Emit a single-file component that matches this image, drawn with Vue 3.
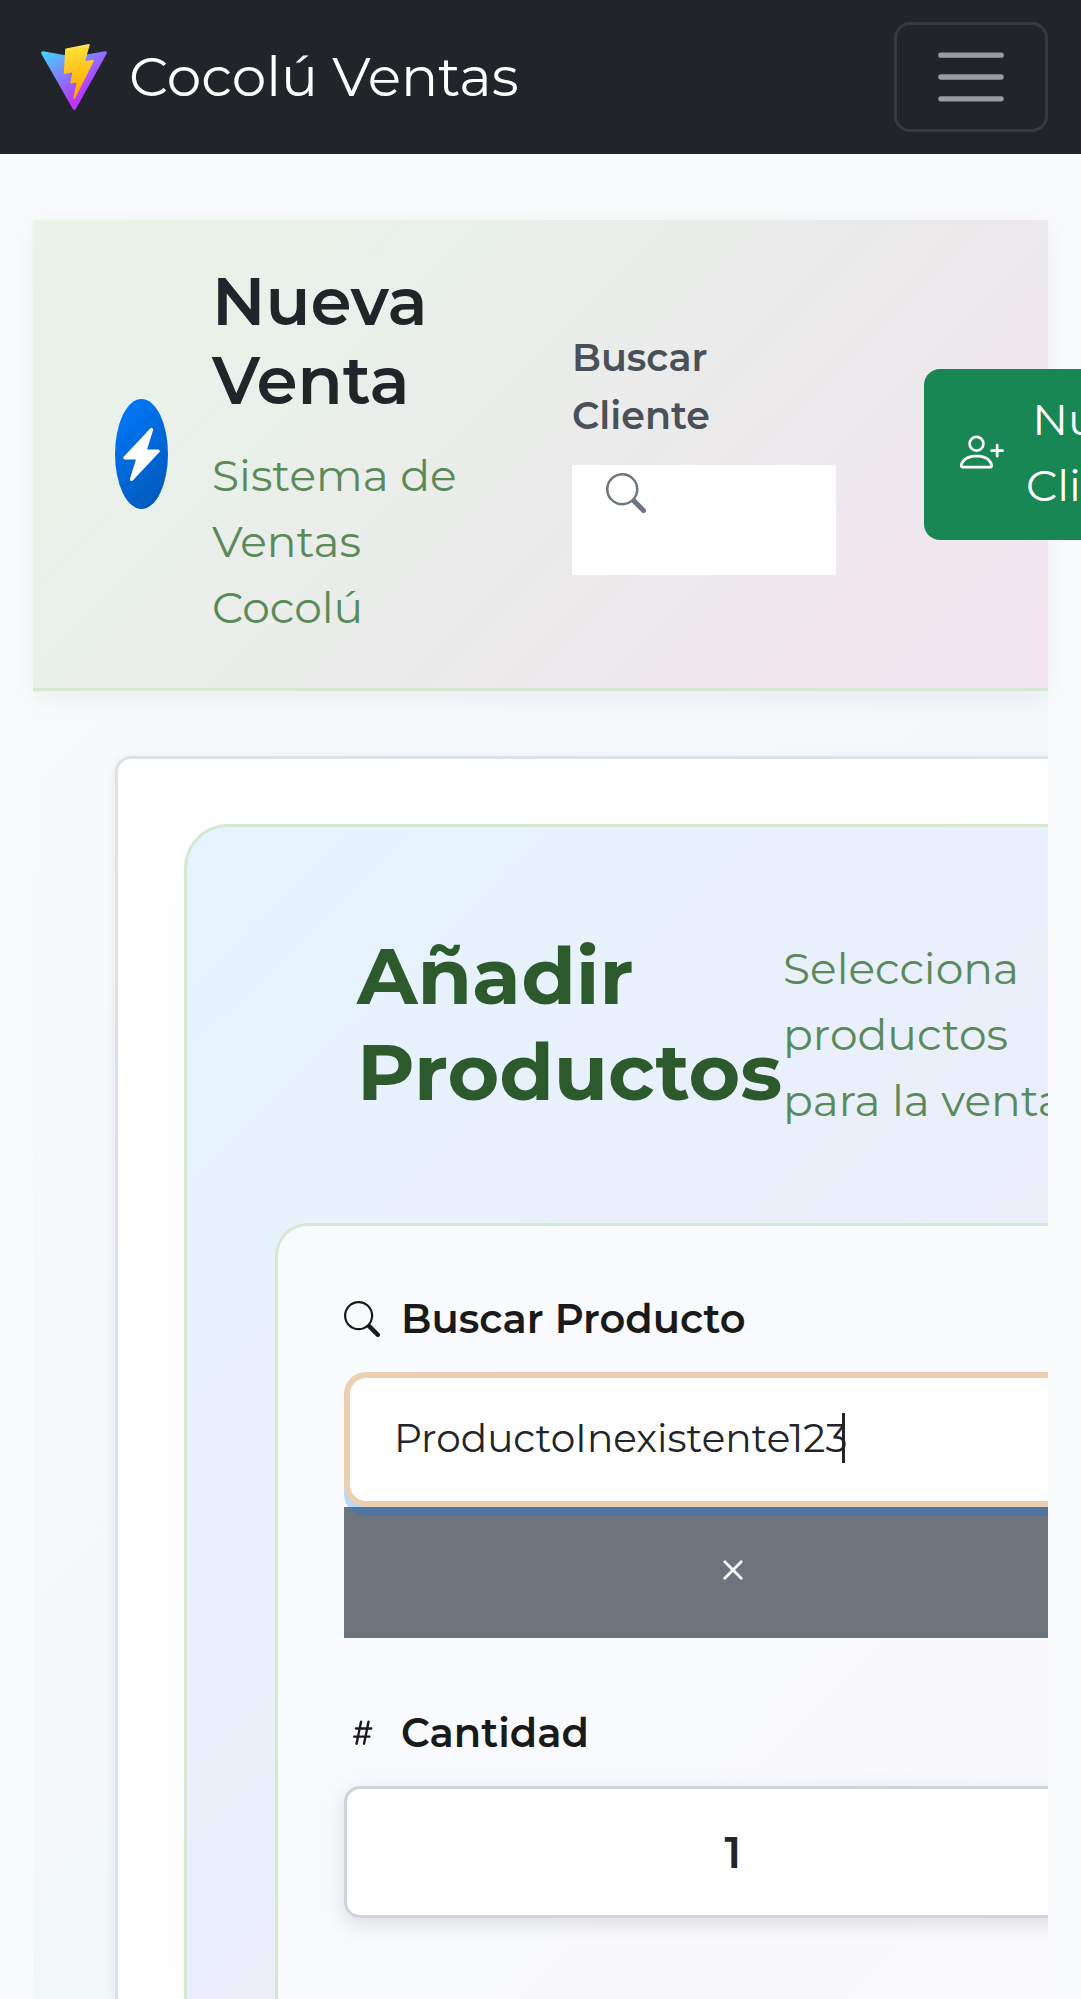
<script setup>
import { ref } from 'vue'

const product = ref('ProductoInexistente123')
const quantity = ref('1')
</script>

<template>
  <div class="app">
    <nav class="navbar">
      <a class="brand" href="#">
        <svg class="logo" viewBox="0 0 256 257" aria-hidden="true">
          <defs>
            <linearGradient id="logo-body" x1="-.828%" x2="57.636%" y1="7.652%" y2="78.411%">
              <stop offset="0%" stop-color="#41D1FF" />
              <stop offset="100%" stop-color="#BD34FE" />
            </linearGradient>
            <linearGradient id="logo-bolt" x1="43.376%" x2="50.316%" y1="2.242%" y2="89.03%">
              <stop offset="0%" stop-color="#FFEA83" />
              <stop offset="8.333%" stop-color="#FFDD35" />
              <stop offset="100%" stop-color="#FFA800" />
            </linearGradient>
          </defs>
          <path fill="url(#logo-body)" d="M255.153 37.938L134.897 252.976c-2.483 4.44-8.862 4.466-11.382.048L.875 37.958c-2.746-4.814 1.371-10.646 6.827-9.67l120.385 21.517a6.537 6.537 0 0 0 2.322-.004l117.867-21.483c5.438-.991 9.574 4.796 6.877 9.62Z" />
          <path fill="url(#logo-bolt)" d="M185.432.063L96.44 17.501a3.268 3.268 0 0 0-2.634 3.014l-5.474 92.456a3.268 3.268 0 0 0 3.997 3.378l24.777-5.718c2.318-.535 4.413 1.507 3.936 3.838l-7.361 36.047c-.495 2.426 1.782 4.5 4.151 3.78l15.304-4.649c2.372-.72 4.652 1.36 4.15 3.788l-11.698 56.621c-.732 3.542 3.979 5.473 5.943 2.437l1.313-2.028l72.516-144.72c1.215-2.423-.88-5.186-3.54-4.672l-25.505 4.922c-2.396.462-4.435-1.77-3.759-4.114l16.646-57.705c.677-2.35-1.37-4.583-3.769-4.113Z" />
        </svg>
        <span>Cocolú Ventas</span>
      </a>
      <button class="toggler" type="button" aria-label="Abrir menú">
        <svg viewBox="0 0 30 30" aria-hidden="true">
          <path stroke="rgba(255,255,255,.55)" stroke-linecap="round" stroke-miterlimit="10" stroke-width="2" fill="none" d="M4 7h22M4 15h22M4 23h22" />
        </svg>
      </button>
    </nav>

    <div class="page">
      <header class="sale-header">
        <div class="sale-title">
          <span class="sale-icon">
            <svg viewBox="0 0 16 16" fill="currentColor" aria-hidden="true">
              <path d="M11.251.068a.5.5 0 0 1 .227.58L9.677 6.5H13a.5.5 0 0 1 .364.843l-8 8.5a.5.5 0 0 1-.842-.49L6.323 9.5H3a.5.5 0 0 1-.364-.843l8-8.5a.5.5 0 0 1 .615-.09z" />
            </svg>
          </span>
          <div class="sale-text">
            <h1>Nueva Venta</h1>
            <p>Sistema de Ventas Cocolú</p>
          </div>
        </div>

        <div class="client-search">
          <label for="client">Buscar Cliente</label>
          <div class="client-box">
            <svg viewBox="0 0 16 16" fill="currentColor" aria-hidden="true">
              <path d="M11.742 10.344a6.5 6.5 0 1 0-1.397 1.398h-.001q.044.06.098.115l3.85 3.85a1 1 0 0 0 1.415-1.414l-3.85-3.85a1 1 0 0 0-.115-.1zM12 6.5a5.5 5.5 0 1 1-11 0 5.5 5.5 0 0 1 11 0" />
            </svg>
            <input id="client" type="text" />
          </div>
        </div>

        <button class="new-client" type="button">
          <svg viewBox="0 0 16 16" fill="currentColor" aria-hidden="true">
            <path d="M6 8a3 3 0 1 0 0-6 3 3 0 0 0 0 6m2-3a2 2 0 1 1-4 0 2 2 0 0 1 4 0m4 8c0 1-1 1-1 1H1s-1 0-1-1 1-4 6-4 6 3 6 4m-1-.004c-.001-.246-.154-.986-.832-1.664C9.516 10.68 8.289 10 6 10s-3.516.68-4.168 1.332c-.678.678-.83 1.418-.832 1.664z" />
            <path d="M13.5 5a.5.5 0 0 1 .5.5V7h1.5a.5.5 0 0 1 0 1H14v1.5a.5.5 0 0 1-1 0V8h-1.5a.5.5 0 0 1 0-1H13V5.5a.5.5 0 0 1 .5-.5" />
          </svg>
          <span>Nuevo Cliente</span>
        </button>
      </header>

      <main class="content">
        <section class="card">
          <div class="panel">
            <div class="panel-head">
              <h2>Añadir Productos</h2>
              <p>Selecciona productos para la venta</p>
            </div>

            <form class="form" @submit.prevent>
              <div class="field">
                <label class="field-label" for="product">
                  <svg viewBox="0 0 16 16" fill="currentColor" aria-hidden="true">
                    <path d="M11.742 10.344a6.5 6.5 0 1 0-1.397 1.398h-.001q.044.06.098.115l3.85 3.85a1 1 0 0 0 1.415-1.414l-3.85-3.85a1 1 0 0 0-.115-.1zM12 6.5a5.5 5.5 0 1 1-11 0 5.5 5.5 0 0 1 11 0" />
                  </svg>
                  Buscar Producto
                </label>
                <div class="product-group">
                  <input id="product" v-model="product" class="product-input" type="text" />
                  <span class="caret"></span>
                  <button class="clear" type="button" aria-label="Limpiar">
                    <svg viewBox="0 0 16 16" fill="currentColor" aria-hidden="true">
                      <path d="M4.646 4.646a.5.5 0 0 1 .708 0L8 7.293l2.646-2.647a.5.5 0 0 1 .708.708L8.707 8l2.647 2.646a.5.5 0 0 1-.708.708L8 8.707l-2.646 2.647a.5.5 0 0 1-.708-.708L7.293 8 4.646 5.354a.5.5 0 0 1 0-.708" />
                    </svg>
                  </button>
                </div>
              </div>

              <div class="field">
                <label class="field-label" for="quantity">
                  <svg viewBox="0 0 16 16" fill="currentColor" aria-hidden="true">
                    <path d="M8.39 12.648a1 1 0 0 0-.015.18c0 .305.21.508.5.508.266 0 .492-.172.555-.477l.554-2.703h1.204c.421 0 .617-.234.617-.547 0-.312-.188-.53-.617-.53h-.985l.516-2.524h1.265c.43 0 .618-.227.618-.547 0-.313-.188-.524-.618-.524h-1.046l.476-2.304a1 1 0 0 0 .016-.164.51.51 0 0 0-.516-.516.54.54 0 0 0-.539.43l-.523 2.554H7.617l.477-2.304c.008-.04.015-.118.015-.164a.51.51 0 0 0-.523-.516.54.54 0 0 0-.531.43L6.53 5.484H5.414c-.43 0-.617.22-.617.532s.187.539.617.539h.906l-.515 2.523H4.609c-.421 0-.609.219-.609.531s.188.547.61.547h.976l-.516 2.492c-.008.04-.015.125-.015.18 0 .305.21.508.5.508.265 0 .492-.172.554-.477l.555-2.703h2.242zm-1-6.109h2.266l-.515 2.563H6.859z" />
                  </svg>
                  Cantidad
                </label>
                <input id="quantity" v-model="quantity" class="quantity-input" type="text" inputmode="numeric" />
              </div>
            </form>
          </div>
        </section>
      </main>
    </div>
  </div>
</template>

<style>
body {
  margin: 0;
  background: #f9fbfd;
}
</style>

<style scoped>
*,
*::before,
*::after {
  box-sizing: border-box;
}

.app {
  display: flex;
  flex-direction: column;
  min-height: 100vh;
  overflow: hidden;
  background: #f9fbfd;
  color: #212529;
  font-family: Montserrat, Inter, sans-serif;
  font-size: 44px;
  line-height: 66px;
}

h1,
h2,
p {
  margin: 0;
}

button,
input {
  margin: 0;
  color: inherit;
  font: inherit;
}

svg {
  display: block;
  flex: none;
}

.navbar {
  display: flex;
  align-items: center;
  justify-content: space-between;
  padding: 22px 33px 22px 41px;
  background: #212529;
}

.brand {
  display: flex;
  align-items: center;
  gap: 22px;
  color: #fff;
  font-size: 55px;
  text-decoration: none;
}

.logo {
  width: 66px;
  height: 66px;
}

.toggler {
  padding: 11px 33px;
  border: 3px solid rgba(255, 255, 255, 0.1);
  border-radius: 16px;
  background: transparent;
}

.toggler svg {
  width: 82px;
  height: 82px;
}

.page {
  display: flex;
  flex: 1;
  flex-direction: column;
  padding: 66px 33px 0;
}

.sale-header {
  position: relative;
  z-index: 1;
  display: flex;
  align-items: center;
  gap: 88px;
  padding: 42px 82px;
  border-bottom: 3px solid #d4e8d4;
  background: linear-gradient(135deg, #e8f5e8 0%, #ebebeb 54%, #f2e4ef 100%);
  box-shadow: 0 6px 28px rgba(0, 0, 0, 0.06);
}

.sale-title {
  display: flex;
  flex: 0 0 369px;
  align-items: center;
  gap: 44px;
}

.sale-icon {
  display: flex;
  flex: 0 0 52px;
  align-items: center;
  justify-content: center;
  height: 110px;
  border-radius: 50%;
  background: linear-gradient(135deg, #007bff, #0056b3);
  color: #fff;
}

.sale-icon svg {
  width: 53px;
  height: 53px;
}

.sale-text {
  padding-bottom: 6px;
}

h1 {
  margin-bottom: 22px;
  font-size: 66px;
  font-weight: 600;
  line-height: 79px;
}

.sale-text p,
.panel-head p {
  color: #5a8a5a;
}

.client-search {
  flex: 0 0 264px;
  min-width: 0;
  padding-bottom: 4px;
}

.client-search label {
  display: block;
  margin-bottom: 20px;
  color: #495057;
  font-size: 38px;
  font-weight: 600;
  line-height: 58px;
}

.client-box {
  display: flex;
  align-items: flex-start;
  height: 110px;
  padding: 8px 0 0 34px;
  background: #fff;
  color: #6c757d;
}

.client-box svg {
  width: 40px;
  height: 40px;
}

.client-box input {
  flex: 1;
  min-width: 0;
  height: 94px;
  padding: 0 16px;
  border: 0;
  outline: 0;
  background: transparent;
}

.new-client {
  display: flex;
  flex: none;
  align-items: center;
  gap: 22px;
  padding: 17px 36px 22px;
  border: 0;
  border-radius: 16px;
  background: #198754;
  color: #fff;
  text-align: center;
}

.new-client svg {
  width: 44px;
  height: 44px;
}

.new-client span {
  width: min-content;
}

.content {
  display: flex;
  flex: 1;
  padding: 65px 82px 0;
  overflow: hidden;
  background: linear-gradient(135deg, #f9fafc 0%, #f2f7fa 60%, #f2f7fa 100%);
}

.card {
  flex: none;
  display: flex;
  width: 100%;
  min-width: 1236px;
  padding: 65px 66px 0;
  border: 3px solid #dee2e6;
  border-bottom: 0;
  border-radius: 16px 16px 0 0;
  background: #fff;
  box-shadow: 0 3px 12px rgba(0, 0, 0, 0.08);
}

.panel {
  display: flex;
  flex: 1;
  flex-direction: column;
  min-width: 0;
  padding: 88px 88px 0;
  border: 3px solid #d4e8d4;
  border-bottom: 0;
  border-radius: 44px 44px 0 0;
  background: linear-gradient(135deg, #e5f4fe 0%, #ebeefa 52%, #eeeaf6 100%);
  box-shadow: 0 22px 88px rgba(90, 138, 90, 0.03);
}

.panel-head {
  display: flex;
  align-items: flex-start;
  margin-bottom: 90px;
  padding: 13px 82px 0;
}

h2 {
  flex: 0 0 426px;
  color: #2d5a2d;
  font-size: 79px;
  font-weight: 700;
  line-height: 96px;
}

.panel-head p {
  flex: 1;
  min-width: 0;
  padding-top: 7px;
}

.form {
  display: flex;
  flex: 1;
  flex-direction: column;
  gap: 68px;
  padding: 66px 66px 78px;
  border: 3px solid #d4e8d4;
  border-bottom: 0;
  border-radius: 33px 33px 0 0;
  background: rgba(255, 255, 255, 0.7);
}

.field-label {
  display: flex;
  align-items: center;
  gap: 21px;
  margin-bottom: 26px;
  color: #1a1a1a;
  font-size: 40px;
  font-weight: 600;
  line-height: 54px;
}

.field-label svg {
  width: 36px;
  height: 36px;
}

.product-group {
  position: relative;
}

.product-input {
  position: relative;
  z-index: 1;
  display: block;
  width: 100%;
  height: 135px;
  padding: 0 44px 3px;
  border: 6px solid #ebcfb0;
  border-radius: 22px;
  outline: 0;
  background: #fff;
  font-size: 39px;
}

.product-group::before {
  position: absolute;
  z-index: 1;
  top: 110px;
  right: 0;
  left: 0;
  height: 34px;
  border-radius: 0 0 22px 22px;
  background: rgba(0, 123, 255, 0.27);
  content: '';
}

.caret {
  position: absolute;
  z-index: 2;
  top: 41px;
  left: 498px;
  width: 3px;
  height: 50px;
  background: #212529;
}

.clear {
  display: flex;
  align-items: center;
  justify-content: center;
  width: 100%;
  height: 131px;
  padding: 0 0 6px;
  border: 0;
  background: #6c757d;
  color: #fff;
}

.clear svg {
  width: 44px;
  height: 44px;
}

.quantity-input {
  display: block;
  width: 100%;
  height: 132px;
  padding: 0 44px;
  border: 3px solid #ced4da;
  border-radius: 16px;
  outline: 0;
  background: #fff;
  box-shadow: 0 6px 22px rgba(0, 0, 0, 0.12);
  font-size: 44px;
  font-weight: 600;
  text-align: center;
}
</style>
